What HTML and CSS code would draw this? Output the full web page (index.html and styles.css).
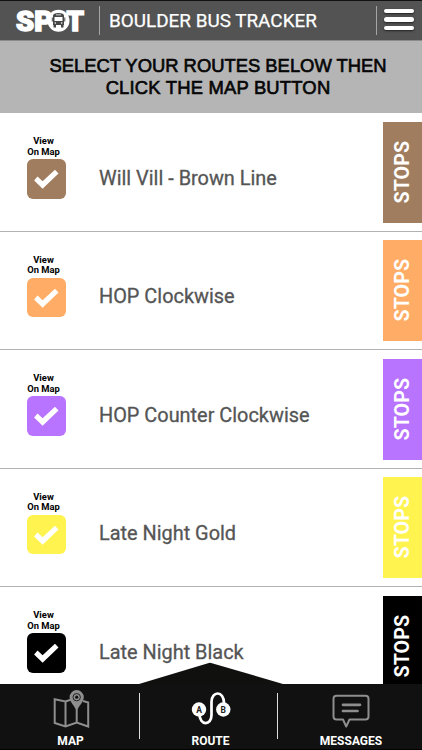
FILE: index.html
```html
<!DOCTYPE html>
<html lang="en">
<head>
<meta charset="utf-8">
<title>Boulder Bus Tracker</title>
<link rel="stylesheet" href="styles.css">
</head>
<body>
<svg width="0" height="0" class="defs"><symbol id="check" viewBox="0 0 40 40"><path d="M7.3 21.7 10.8 17.7 16 22.6 28.7 10.7 32.3 14.5 16 30.2z" fill="#fff"/></symbol></svg>
<div class="app">
  <header class="header">
    <svg class="logo" width="72" height="24" viewBox="0 0 72 24">
      <text x="1" y="21.6" textLength="37" lengthAdjust="spacingAndGlyphs" class="logo-text">SP</text>
      <text x="51.5" y="21.6" textLength="17.5" lengthAdjust="spacingAndGlyphs" class="logo-text">T</text>
      <circle cx="43.5" cy="11.700" r="11" fill="#fff"/>
      <path d="M38 6.500Q38 4 43.500 4T49 6.500V16H38z" fill="#474747"/>
      <path d="M38.500 15H41v3.500h-2.500zM46 15h2.500v3.500H46zM36.800 8.500h1v4h-1zM49.300 8.500h1v4h-1z" fill="#474747"/>
      <path d="M39.500 8h8v4h-8zM41 5.500h5v.8h-5z" fill="#fff"/>
      <circle cx="40.300" cy="14" r=".8" fill="#fff"/><circle cx="46.700" cy="14" r=".8" fill="#fff"/>
    </svg>
    <h1 class="title">BOULDER BUS TRACKER</h1>
    <div class="menu"><i></i><i></i><i></i></div>
  </header>
  <div class="banner"><p class="line1">SELECT YOUR ROUTES BELOW THEN</p><p class="line2">CLICK THE MAP BUTTON</p></div>
  <main class="routes">
    <section class="route brown"><div class="pick"><p>View<br>On Map</p><svg class="box"><use href="#check"/></svg></div><h2>Will Vill - Brown Line</h2><div class="stops"><span>STOPS</span></div></section>
    <section class="route orange"><div class="pick"><p>View<br>On Map</p><svg class="box"><use href="#check"/></svg></div><h2>HOP Clockwise</h2><div class="stops"><span>STOPS</span></div></section>
    <section class="route purple"><div class="pick"><p>View<br>On Map</p><svg class="box"><use href="#check"/></svg></div><h2>HOP Counter Clockwise</h2><div class="stops"><span>STOPS</span></div></section>
    <section class="route yellow"><div class="pick"><p>View<br>On Map</p><svg class="box"><use href="#check"/></svg></div><h2>Late Night Gold</h2><div class="stops"><span>STOPS</span></div></section>
    <section class="route black"><div class="pick"><p>View<br>On Map</p><svg class="box"><use href="#check"/></svg></div><h2>Late Night Black</h2><div class="stops"><span>STOPS</span></div></section>
  </main>
  <nav class="tabs">
    <svg class="peak" width="144" height="23" viewBox="0 0 144 23"><path d="M0 22 69 1.200Q71 .5 73 1.200L144 22v1H0z" fill="#10110f"/></svg>
    <div class="tab map">
      <svg width="40" height="40" viewBox="0 0 40 40" fill="none" stroke="#8e8e8e" stroke-width="2">
        <path d="M20.500 10.500 14.500 12.500 3.700 10.300V34L14.500 37.500 25.700 33.500 37.200 37.500V13.500L32 12M14.500 12.500V37.500M25.700 20V33.500"/>
        <path d="M25.700 22.500C24 17 18.600 13 18.600 8.200A7.100 7.100 0 0 1 32.800 8.200C32.800 13 27.400 17 25.700 22.500z" fill="#8e8e8e" stroke="none"/>
        <circle cx="25.700" cy="8.200" r="3.700" stroke="#222" stroke-width="1"/><circle cx="25.700" cy="8.200" r="1.600" fill="#111" stroke="none"/>
      </svg>
      <span>MAP</span>
    </div>
    <div class="tab mid">
      <svg width="40" height="40" viewBox="0 0 40 40">
        <path d="M8.500 20V25C8.500 37 20.500 37 20.500 26V13C20.500 1.500 33 1.500 33 14V20" fill="none" stroke="#fff" stroke-width="2.700"/>
        <circle cx="8" cy="20.500" r="7.200" fill="#fff"/><circle cx="32.300" cy="20.500" r="7.200" fill="#fff"/>
        <text x="8" y="23.600" class="stop-letter">A</text><text x="32.300" y="23.600" class="stop-letter">B</text>
      </svg>
      <span>ROUTE</span>
    </div>
    <div class="tab messages">
      <svg width="40" height="40" viewBox="0 0 40 40" fill="none" stroke="#8e8e8e" stroke-width="2" stroke-linejoin="round">
        <path d="M5.500 6.800H34.500Q37.500 6.800 37.500 9.800V27.500Q37.500 30.500 34.500 30.500H18.500L15.200 37.500 12 30.500H5.500Q2.500 30.500 2.500 27.500V9.800Q2.500 6.800 5.500 6.800z"/>
        <path d="M12 15.800H29M12 22H26.500" stroke-width="2.700" stroke-linecap="round"/>
      </svg>
      <span>MESSAGES</span>
    </div>
  </nav>
</div>
</body>
</html>
```
FILE: styles.css
```css
* { box-sizing: border-box; }
body, h1, h2, p { margin: 0; }
body { font-family: Roboto, "Liberation Sans", sans-serif; background: #fff; }
.defs { position: absolute; }
.app { width: 422px; height: 750px; overflow: hidden; display: flex; flex-direction: column; }
.header { flex: none; height: 41px; padding: 0 9px 0 15px; background: #535353; border-top: 1px solid #111; border-bottom: 1px solid #8b8b8b; display: flex; align-items: center; }
.logo { flex: none; width: 72px; overflow: visible; }
.logo-text { font: 900 27.5px Roboto, sans-serif; fill: #fff; stroke: #fff; stroke-width: 1.5; }
.title { flex: 1; height: 29px; margin-left: 12px; padding-left: 9px; border-left: 1px solid #a5a5a5; color: #fff; font-size: 18.9px; font-weight: 400; line-height: 29px; white-space: nowrap; -webkit-text-stroke: .25px #fff; }
.menu { width: 37px; height: 29px; border-left: 1px solid #a5a5a5; padding: 3px 0 0 7px; display: flex; flex-direction: column; gap: 4px; }
.menu i { height: 4.4px; width: 30px; border-radius: 3px; background: #fff; box-shadow: 0 1px 2px #222; }
.banner { flex: none; height: 72px; padding-top: 14px; background: #b5b5b5; color: #060606; font: 400 18.4px/22px "Liberation Sans", sans-serif; text-align: center; white-space: nowrap; -webkit-text-stroke: .65px #060606; }
.line1, .line2 { padding-left: 14px; }
.line2 { letter-spacing: .2px; }
.routes { flex: 1; min-height: 0; overflow: hidden; }
.route { height: 118.5px; border-bottom: 1px solid #b2b2b2; display: flex; align-items: flex-start; }
.pick { width: 72px; margin-left: 27px; padding-top: 23px; }
.pick p { width: 33px; color: #000; font-size: 9.4px; font-weight: 700; line-height: 10.6px; text-align: center; white-space: nowrap; height: 23px; }
.box { display: block; width: 39px; height: 39.5px; border-radius: 6px; background: var(--c); }
.route h2 { flex: 1; padding-top: 52.6px; color: #555; font-size: 19.9px; font-weight: 400; line-height: 26px; white-space: nowrap; -webkit-text-stroke: .3px #555; }
.stops { width: 39px; height: 101px; margin-top: 8.7px; padding-left: 1px; background: var(--c); color: #fff; display: flex; align-items: center; justify-content: center; }
.stops span { writing-mode: vertical-rl; transform: rotate(180deg); font-size: 19.7px; font-weight: 700; line-height: 24px; }
.brown { --c: #a07d5e; }
.orange { --c: #ffad66; }
.purple { --c: #b873ff; }
.yellow { --c: #fff44f; }
.black { --c: #000; }
.tabs { flex: none; position: relative; height: 66px; background: #111; border-bottom: 1px solid #000; display: flex; padding-top: 5px; }
.peak { position: absolute; left: 139px; top: -22px; }
.tab { flex: none; display: flex; flex-direction: column; align-items: center; }
.tab svg { flex: none; }
.tab span { color: #fff; font-size: 12px; font-weight: 700; line-height: 14px; margin-top: 5px; }
.map { width: 139px; padding-left: 2px; }
.mid { width: 139px; height: 46px; margin-top: 4px; border-left: 1px solid #ddd; border-right: 1px solid #ddd; padding-left: 4px; }
.mid svg { margin-top: -4px; }
.messages { width: 144px; padding-left: 2px; }
.stop-letter { font: 700 8.5px Roboto, sans-serif; fill: #222; text-anchor: middle; }
```
